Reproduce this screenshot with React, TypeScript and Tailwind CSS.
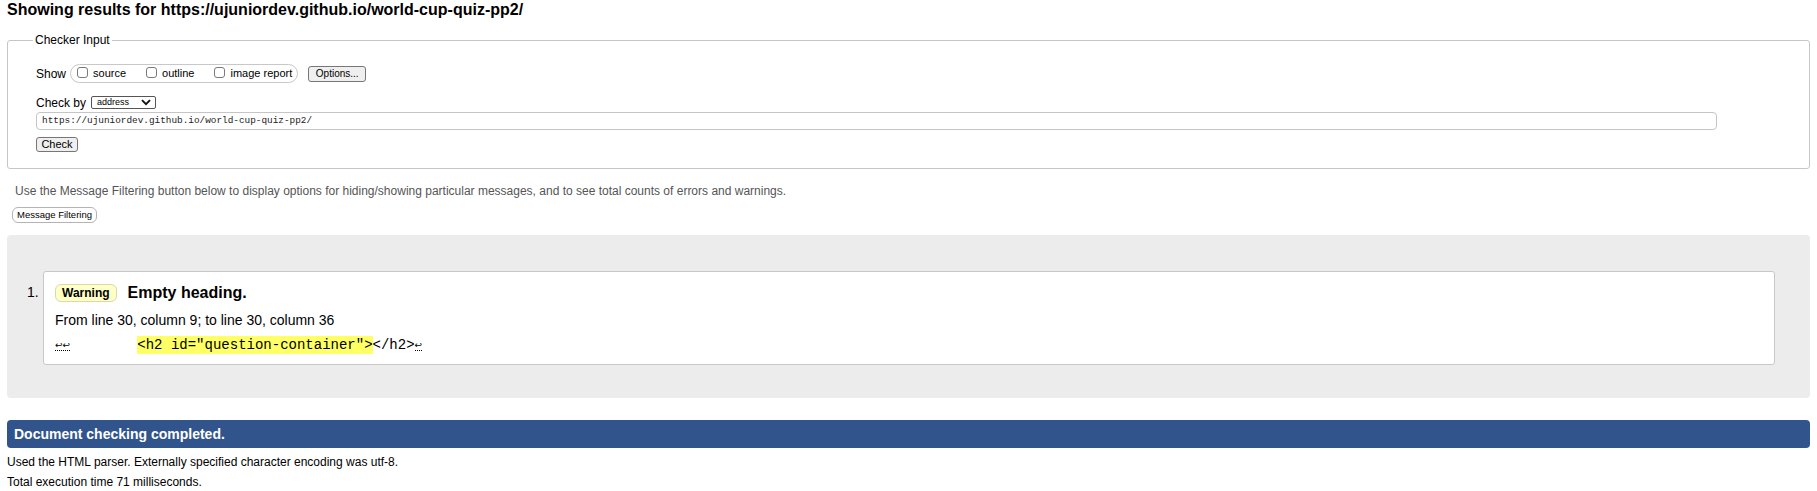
export default function App() {
  const checks = ['source', 'outline', 'image report']

  return (
    <div className="min-h-screen bg-white px-[7px] font-['Liberation_Sans',Arial,sans-serif] text-black">
      <h2 className="text-[16px] font-bold leading-[20px]">
        Showing results for https://ujuniordev.github.io/world-cup-quiz-pp2/
      </h2>

      <fieldset className="mt-[13px] rounded-[3px] border border-[#c6c6c6] pb-[16px] pl-[28px] pr-[92px]">
        <legend className="-ml-[3px] px-[2px] text-[12px] leading-[14px]">Checker Input</legend>

        {/* show options */}
        <div className="mt-[17px] flex h-[19px] items-center">
          <span className="text-[12px] leading-[14px]">Show</span>
          <div className="ml-[4px] flex h-[19px] items-center gap-[20px] rounded-full border border-[#c8c8c8] pl-[6px] pr-[5px]">
            {checks.map((c) => (
              <label key={c} className="flex items-center">
                <input
                  type="checkbox"
                  className="mb-[2px] h-[11px] w-[11px] appearance-none rounded-[3px] border border-[#7a7a7a] bg-white"
                />
                <span className="ml-[5px] text-[11px] leading-[13px]">{c}</span>
              </label>
            ))}
          </div>
          <button className="ml-[10px] flex h-[16px] w-[58px] items-center justify-center rounded-[3px] border border-[#767676] bg-[#efefef] text-[10px] leading-[12px]">
            Options...
          </button>
        </div>

        {/* check by */}
        <div className="mt-[13px] flex h-[13px] items-center">
          <span className="text-[12px] leading-[14px]">Check by</span>
          <div className="ml-[5px] flex h-[13px] w-[65px] items-center justify-between rounded-[2px] border border-[#555] bg-white pl-[5px] pr-[4px]">
            <span className="text-[9px] leading-[11px]">address</span>
            <svg width="10" height="7" viewBox="0 0 10 7" fill="none">
              <path d="M1 1.2 L5 5.2 L9 1.2" stroke="#111" strokeWidth="1.9" />
            </svg>
          </div>
        </div>

        <div className="mt-[3px] flex h-[18px] items-center rounded-[4px] border border-[#c5c5c5] pl-[5px] font-['Liberation_Mono',monospace] text-[9.4px] text-[#222]">
          https://ujuniordev.github.io/world-cup-quiz-pp2/
        </div>

        <button className="mt-[7px] flex h-[15px] w-[42px] items-center justify-center rounded-[3px] border border-[#767676] bg-[#efefef] text-[11px] leading-[13px]">
          Check
        </button>
      </fieldset>

      <p className="mt-[14px] pl-[8px] text-[12px] leading-[16px] text-[#555]">
        Use the Message Filtering button below to display options for hiding/showing particular messages, and to see total counts of errors and warnings.
      </p>

      <button className="ml-[5px] mt-[8px] flex h-[16px] w-[85px] items-center justify-center rounded-[6px] border border-[#b4b4b4] bg-white text-[9.5px] leading-[12px]">
        Message Filtering
      </button>

      {/* messages */}
      <div className="mt-[12px] flex rounded-[4px] bg-[#ececec] pb-[33px] pl-[20px] pr-[35px] pt-[36px]">
        <span className="w-[16px] shrink-0 pt-[12px] text-[14px] leading-[18px]">1.</span>
        <div className="flex-1 rounded-[3px] border border-[#c8c8c8] bg-white pb-[10px] pl-[11px] pt-[12px]">
          <div className="flex h-[18px] items-center">
            <span className="flex h-[18px] items-center rounded-[6px] border border-[#dcd8a8] bg-[#ffffc8] px-[6px] text-[12px] font-bold leading-[14px]">
              Warning
            </span>
            <span className="ml-[11px] text-[16px] font-bold leading-[18px]">Empty heading.</span>
          </div>
          <p className="mt-[9px] text-[14px] leading-[18px]">From line 30, column 9; to line 30, column 36</p>
          <p className="mt-[7px] flex items-center whitespace-pre font-['Liberation_Mono',monospace] text-[14px] leading-[18px]">
            <span className="border-b border-dotted border-black font-['DejaVu_Sans',sans-serif] text-[9px] leading-[10px]">↩↩</span>
            <span>{'        '}</span>
            <span className="bg-[#ffff66]">{'<h2 id="question-container">'}</span>
            <span>{'</h2>'}</span>
            <span className="border-b border-dotted border-black font-['DejaVu_Sans',sans-serif] text-[9px] leading-[10px]">↩</span>
          </p>
        </div>
      </div>

      <div className="mt-[22px] flex h-[28px] items-center rounded-[4px] bg-[#30548b] pl-[7px] text-[14px] font-bold text-white">
        Document checking completed.
      </div>

      <p className="mt-[6px] text-[12px] leading-[16px]">
        Used the HTML parser. Externally specified character encoding was utf-8.
      </p>
      <p className="mt-[4px] text-[12px] leading-[16px]">Total execution time 71 milliseconds.</p>
    </div>
  )
}
